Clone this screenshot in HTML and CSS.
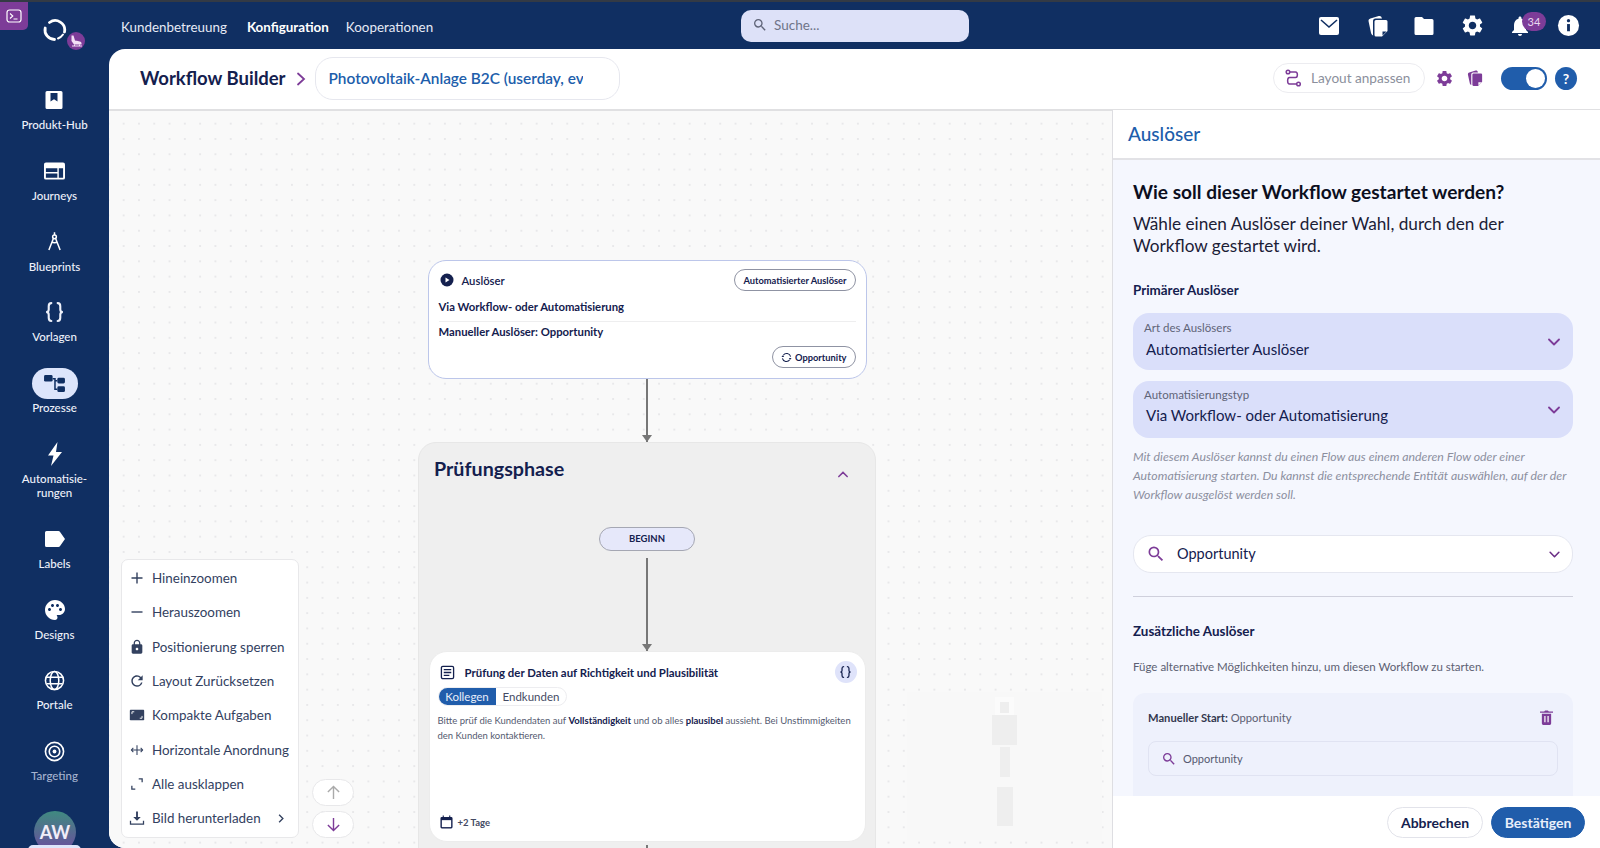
FILE: index.html
```html
<!DOCTYPE html>
<html lang="de">
<head>
    <meta charset="UTF-8">
    <meta name="viewport" content="width=device-width, initial-scale=1.0">
    <title>Workflow Builder</title>
    <link rel="stylesheet" href="styles.css">
</head>
<body>
    <svg class="sprites" width="0" height="0">
        <defs>
            <symbol id="i-gear" viewBox="0 0 24 24"><path d="M19.14 12.94c.04-.3.06-.61.06-.94 0-.32-.02-.64-.07-.94l2.03-1.58c.18-.14.23-.41.12-.61l-1.92-3.32c-.12-.22-.37-.29-.59-.22l-2.39.96c-.5-.38-1.03-.7-1.62-.94l-.36-2.54c-.04-.24-.24-.41-.48-.41h-3.84c-.24 0-.43.17-.47.41l-.36 2.54c-.59.24-1.13.57-1.62.94l-2.39-.96c-.22-.08-.47 0-.59.22L2.74 8.87c-.12.21-.08.47.12.61l2.03 1.58c-.05.3-.09.63-.09.94s.02.64.07.94l-2.03 1.58c-.18.14-.23.41-.12.61l1.92 3.32c.12.22.37.29.59.22l2.39-.96c.5.38 1.03.7 1.62.94l.36 2.54c.05.24.24.41.48.41h3.84c.24 0 .44-.17.47-.41l.36-2.54c.59-.24 1.13-.56 1.62-.94l2.39.96c.22.08.47 0 .59-.22l1.92-3.32c.12-.22.07-.47-.12-.61l-2.01-1.58zM12 15.6c-1.98 0-3.6-1.62-3.6-3.6s1.62-3.6 3.6-3.6 3.6 1.62 3.6 3.6-1.62 3.6-3.6 3.6z"/></symbol>
            <symbol id="i-copies" viewBox="0 0 24 24"><path d="M10 6h10a1.500 1.500 0 0 1 1.500 1.500V17L16 22.500h-6A1.500 1.500 0 0 1 8.500 21V7.500A1.500 1.500 0 0 1 10 6zm6.500 15.500l4-4h-4z" fill-rule="evenodd"/><path d="M7.200 21.500C5.800 21 5.200 20 5 18.800L2.600 7.500C2.300 6 3 5 4.400 4.600L12.800 2c1.500-.4 2.600.2 3.200 2.500H9.500a2.500 2.500 0 0 0-2.500 2.500v13.500c0 .4.100.7.200 1z"/></symbol>
            <symbol id="i-search" viewBox="0 0 24 24"><path d="M15.500 14h-.79l-.28-.27A6.470 6.470 0 0 0 16 9.500 6.500 6.500 0 1 0 9.500 16c1.610 0 3.090-.59 4.230-1.570l.27.28v.79l5 4.990L20.490 19l-4.990-5zm-6 0C7.010 14 5 11.990 5 9.500S7.010 5 9.500 5 14 7.010 14 9.500 11.990 14 9.500 14z"/></symbol>
            <symbol id="i-down" viewBox="0 0 12 8"><path d="M1 1.500l5 5 5-5" fill="none" stroke="currentColor" stroke-width="1.800" stroke-linecap="round" stroke-linejoin="round"/></symbol>
            <symbol id="i-braces" viewBox="0 0 20 19"><path d="M7 1C4.500 1 4.500 2.500 4.500 4v3c0 1.500-1 2.500-2.500 2.500 1.500 0 2.500 1 2.500 2.500v3c0 1.500 0 3 2.500 3M13 1c2.500 0 2.500 1.500 2.500 3v3c0 1.500 1 2.500 2.500 2.500-1.500 0-2.500 1-2.500 2.500v3c0 1.500 0 3-2.500 3" fill="none" stroke="currentColor" stroke-width="2" stroke-linecap="round"/></symbol>
        </defs>
    </svg>

    <div class="terminal-tab">
        <svg viewBox="0 0 16 14" width="16" height="14"><rect x="1" y="1" width="14" height="12" rx="2.500" fill="none" stroke="#fff" stroke-width="1.200"/><path d="M4 4.500L6.800 7 4 9.500M7.500 10h4" fill="none" stroke="#fff" stroke-width="1.100"/></svg>
    </div>

    <header class="topbar">
        <div class="logo">
            <svg viewBox="0 0 26 26" width="26" height="26" fill="none" stroke="#fff" stroke-linecap="round"><path d="M7.500 5.500A9.500 9.500 0 0 1 22.500 15" stroke-width="2.800"/><path d="M3.200 11A9.500 9.500 0 0 0 12.500 22.500" stroke-width="2.800"/><path d="M16 21.500c2.500-1 4-2.500 5-4" stroke-width="2"/></svg>
            <span class="logo-badge">
                <svg viewBox="0 0 14 14" width="14" height="14"><path d="M2.500 1.500h2L6 6.500c2 .5 6 .5 6.500 2.500v1.500H5L2.500 7z" fill="#f3dff6"/><path d="M3 12h10M5.500 10.500v1.500M10.500 10.500v1.500" stroke="#f3dff6" stroke-width="1"/></svg>
            </span>
        </div>
        <nav class="topnav">
            <a>Kundenbetreuung</a>
            <a class="current">Konfiguration</a>
            <a>Kooperationen</a>
        </nav>
        <div class="search">
            <svg class="icon" width="16" height="16"><use href="#i-search"/></svg>
            <span>Suche...</span>
        </div>
        <div class="top-icons">
            <svg viewBox="0 0 22 20" width="22" height="20"><path d="M1 3a2 2 0 0 1 2-2h16a2 2 0 0 1 2 2v14a2 2 0 0 1-2 2H3a2 2 0 0 1-2-2z" fill="#fff"/><path d="M3 4l8 7 8-7" fill="none" stroke="#102f62" stroke-width="1.600"/></svg>
            <svg class="top-copies" width="24" height="24"><use href="#i-copies"/></svg>
            <svg viewBox="0 0 24 24" width="24" height="24"><path d="M4 3h6l2 2h8a1.500 1.500 0 0 1 1.500 1.500v13A1.500 1.500 0 0 1 20 21H4a1.500 1.500 0 0 1-1.500-1.500v-15A1.500 1.500 0 0 1 4 3z"/></svg>
            <svg width="25" height="25"><use href="#i-gear"/></svg>
            <div class="bell">
                <svg viewBox="0 0 24 24" width="24" height="24"><path d="M12 22c1.100 0 2-.9 2-2h-4c0 1.100.9 2 2 2zm6-6v-5c0-3.070-1.630-5.640-4.500-6.320V4c0-.83-.67-1.500-1.500-1.500s-1.500.67-1.500 1.500v.68C7.640 5.360 6 7.920 6 11v5l-2 2v1h16v-1l-2-2z"/></svg>
                <span class="bell-count">34</span>
            </div>
            <svg viewBox="0 0 24 24" width="23" height="23"><circle cx="12" cy="12" r="11"/><circle cx="12" cy="7" r="1.700" fill="#102f62"/><path d="M10.500 10.500h3V18h-3z" fill="#102f62"/></svg>
        </div>
    </header>

    <div class="app">
        <aside class="sidebar">
            <a class="side-item">
                <span class="side-icon"><svg viewBox="0 0 20 20" width="20" height="20"><path d="M3 1h14a1.500 1.500 0 0 1 1.500 1.500v15A1.500 1.500 0 0 1 17 19H3a1.500 1.500 0 0 1-1.500-1.500v-15A1.500 1.500 0 0 1 3 1z"/><path d="M6.500 3h7v8.500L10 9.300l-3.500 2.200z" fill="#102f62"/></svg></span>
                <span>Produkt-Hub</span>
            </a>
            <a class="side-item">
                <span class="side-icon"><svg viewBox="0 0 22 18" width="21" height="18"><path d="M2 0h18a2 2 0 0 1 2 2v14a2 2 0 0 1-2 2H2a2 2 0 0 1-2-2V2a2 2 0 0 1 2-2z"/><path d="M2 6h12v4H2zM2 11.500h12V16H2zM15.500 6H20v10h-4.500z" fill="#102f62"/></svg></span>
                <span>Journeys</span>
            </a>
            <a class="side-item">
                <span class="side-icon"><svg viewBox="0 0 16 20" width="15" height="19" fill="none" stroke="#fff" stroke-width="1.600"><circle cx="8" cy="5" r="2"/><path d="M8 0v3M6.800 6.800L2 19M9.200 6.800L14 19M5 10.500c2 1 4 1 6 0"/></svg></span>
                <span>Blueprints</span>
            </a>
            <a class="side-item">
                <span class="side-icon"><svg width="21" height="20"><use href="#i-braces"/></svg></span>
                <span>Vorlagen</span>
            </a>
            <a class="side-item active">
                <span class="side-icon"><svg viewBox="0 0 24 20" width="23" height="19"><rect x="1" y="1" width="9" height="7" rx="1.500" fill="#102f62"/><rect x="15" y="4" width="8" height="6" rx="1.500" fill="#102f62"/><rect x="15" y="13" width="8" height="6" rx="1.500" fill="#102f62"/><path d="M10 5h2.500v11H15M12.500 7H15" fill="none" stroke="#102f62" stroke-width="1.600"/></svg></span>
                <span>Prozesse</span>
            </a>
            <a class="side-item">
                <span class="side-icon"><svg viewBox="0 0 16 24" width="16" height="24"><path d="M10.500 0L1 13.500h5.500L4 24l11-14H9z"/></svg></span>
                <span>Automatisie-<br>rungen</span>
            </a>
            <a class="side-item">
                <span class="side-icon"><svg viewBox="0 0 20 16" width="20" height="16"><path d="M1.500 0h12c.6 0 1 .2 1.400.7L20 8l-5.100 7.300c-.4.500-.8.700-1.400.700h-12A1.500 1.500 0 0 1 0 14.500v-13A1.500 1.500 0 0 1 1.500 0z"/></svg></span>
                <span>Labels</span>
            </a>
            <a class="side-item">
                <span class="side-icon"><svg viewBox="0 0 24 24" width="24" height="24"><path d="M12 2C6.490 2 2 6.490 2 12s4.490 10 10 10c1.380 0 2.500-1.120 2.500-2.500 0-.61-.23-1.200-.64-1.670-.08-.1-.13-.21-.13-.33 0-.28.22-.5.500-.5H16c3.310 0 6-2.690 6-6 0-4.960-4.490-9-10-9zm5.500 11c-.83 0-1.500-.67-1.500-1.500s.67-1.500 1.500-1.500 1.500.67 1.500 1.500-.67 1.500-1.500 1.500zm-3-4c-.83 0-1.500-.67-1.500-1.500S13.670 6 14.500 6s1.500.67 1.500 1.500S15.330 9 14.500 9zM5 11.500c0-.83.67-1.500 1.500-1.500s1.500.67 1.500 1.500S7.330 13 6.500 13 5 12.330 5 11.500zm6-4c0 .83-.67 1.500-1.500 1.500S8 8.330 8 7.500 8.670 6 9.500 6s1.500.67 1.500 1.500z"/></svg></span>
                <span>Designs</span>
            </a>
            <a class="side-item">
                <span class="side-icon"><svg viewBox="0 0 22 22" width="21" height="21" fill="none" stroke="#fff" stroke-width="1.600"><circle cx="11" cy="11" r="9.500"/><ellipse cx="11" cy="11" rx="4.500" ry="9.500"/><path d="M2.500 7.500h17M2.500 14.500h17"/></svg></span>
                <span>Portale</span>
            </a>
            <a class="side-item muted">
                <span class="side-icon"><svg viewBox="0 0 22 22" width="21" height="21" fill="none" stroke="#fff" stroke-width="1.700"><circle cx="11" cy="11" r="9.500"/><circle cx="11" cy="11" r="5.500"/><circle cx="11" cy="11" r="2" fill="#fff" stroke="none"/></svg></span>
                <span>Targeting</span>
            </a>
            <div class="avatar">AW</div>
        </aside>

        <main class="main">
            <div class="page-head">
                <h1>Workflow Builder</h1>
                <svg class="crumb" viewBox="0 0 10 14" width="10" height="14"><path d="M2 1.500L8 7l-6 5.500" fill="none" stroke="#7d3c98" stroke-width="1.800" stroke-linecap="round"/></svg>
                <div class="flow-name"><span>Photovoltaik-Anlage B2C (userday, ev</span></div>
                <div class="head-tools">
                    <button class="layout-btn">
                        <svg viewBox="0 0 18 18" width="18" height="18" fill="none" stroke="#7d3c98" stroke-width="1.500"><circle cx="4" cy="3" r="1.800"/><circle cx="14.500" cy="15" r="1.800"/><path d="M6 3h5.500c2.500 0 2.500 5.500 0 5.500h-6c-2.500 0-2.500 6.500 0 6.500h7"/></svg>
                        Layout anpassen
                    </button>
                    <svg class="purple" width="19" height="19"><use href="#i-gear"/></svg>
                    <svg class="purple" width="18" height="18"><use href="#i-copies"/></svg>
                    <div class="toggle"><span></span></div>
                    <div class="help">?</div>
                </div>
            </div>

            <div class="workspace">
                <section class="canvas">
                    <div class="minimap">
                        <i class="mm-a"></i><i class="mm-b"></i><i class="mm-c"></i><i class="mm-d"></i>
                    </div>

                    <div class="flow">
                        <div class="trigger-card">
                            <div class="trigger-top">
                                <svg viewBox="0 0 14 14" width="14" height="14"><circle cx="7" cy="7" r="6.500" fill="#14204e"/><path d="M5.500 4.500L9.500 7l-4 2.500z" fill="#fff"/></svg>
                                <span class="trigger-name">Auslöser</span>
                                <span class="chip">Automatisierter Auslöser</span>
                            </div>
                            <div class="trigger-line">Via Workflow- oder Automatisierung</div>
                            <div class="trigger-line ruled">Manueller Auslöser: Opportunity</div>
                            <div class="trigger-foot">
                                <span class="chip">
                                    <svg viewBox="0 0 12 12" width="11" height="11" fill="none" stroke="#14204e" stroke-width="1.200"><path d="M10.500 5A4.500 4.500 0 0 0 2.500 3.500M1.500 7a4.500 4.500 0 0 0 8 1.500"/><path d="M.5 5.500h3L2 3.500zM8.500 6.500h3l-1.500 2z" fill="#14204e" stroke="none"/></svg>
                                    Opportunity
                                </span>
                            </div>
                        </div>

                        <div class="edge edge-first"></div>

                        <div class="phase">
                            <div class="phase-head">
                                <h2>Prüfungsphase</h2>
                                <svg class="phase-toggle" viewBox="0 0 12 8" width="10" height="7"><path d="M1 6.500l5-5 5 5" fill="none" stroke="#7d3c98" stroke-width="1.800" stroke-linecap="round"/></svg>
                            </div>
                            <div class="begin">BEGINN</div>
                            <div class="edge edge-long"></div>
                            <div class="task-card">
                                <div class="task-top">
                                    <svg viewBox="0 0 16 16" width="15" height="15" fill="none" stroke="#14204e" stroke-width="1.400"><rect x="1.500" y="1.500" width="13" height="13" rx="1.500"/><path d="M4 5h8M4 8h8M4 11h6"/></svg>
                                    <span class="task-title">Prüfung der Daten auf Richtigkeit und Plausibilität</span>
                                    <span class="task-vars"><svg width="13" height="12"><use href="#i-braces"/></svg></span>
                                </div>
                                <div class="tabs">
                                    <span class="tab on">Kollegen</span>
                                    <span class="tab">Endkunden</span>
                                </div>
                                <p class="task-text">Bitte prüf die Kundendaten auf <b>Vollständigkeit</b> und ob alles <b>plausibel</b> aussieht. Bei Unstimmigkeiten den Kunden kontaktieren.</p>
                                <div class="task-foot">
                                    <svg viewBox="0 0 14 14" width="13" height="14"><path d="M2 1.500h10a1.500 1.500 0 0 1 1.500 1.500v9.500A1.500 1.500 0 0 1 12 14H2a1.500 1.500 0 0 1-1.500-1.500V3A1.500 1.500 0 0 1 2 1.500z" fill="#14204e"/><rect x="2" y="5" width="10" height="7.500" fill="#fff"/><path d="M3.500 0v2M10.500 0v2" stroke="#14204e" stroke-width="1.200"/></svg>
                                    <span>+2 Tage</span>
                                </div>
                            </div>
                            <div class="edge edge-tail"></div>
                        </div>
                    </div>

                    <div class="zoom-menu">
                        <div class="zoom-item"><svg viewBox="0 0 14 14" width="14" height="14"><path d="M7 1.500v11M1.500 7h11" stroke-width="1.400" stroke="#33415f"/></svg>Hineinzoomen</div>
                        <div class="zoom-item"><svg viewBox="0 0 14 14" width="14" height="14"><path d="M1.500 7h11" stroke-width="1.400" stroke="#33415f"/></svg>Herauszoomen</div>
                        <div class="zoom-item"><svg viewBox="0 0 24 24" width="16" height="16"><path d="M18 8h-1V6c0-2.760-2.240-5-5-5S7 3.240 7 6v2H6c-1.100 0-2 .9-2 2v10c0 1.100.9 2 2 2h12c1.100 0 2-.9 2-2V10c0-1.100-.9-2-2-2zm-6 9c-1.100 0-2-.9-2-2s.9-2 2-2 2 .9 2 2-.9 2-2 2zm3.100-9H8.900V6c0-1.710 1.390-3.100 3.100-3.100 1.710 0 3.100 1.390 3.100 3.100v2z"/></svg>Positionierung sperren</div>
                        <div class="zoom-item"><svg viewBox="0 0 24 24" width="17" height="17"><path d="M17.650 6.350A7.958 7.958 0 0 0 12 4c-4.420 0-7.990 3.580-7.990 8s3.570 8 7.990 8c3.730 0 6.840-2.550 7.730-6h-2.080A5.990 5.990 0 0 1 12 18c-3.310 0-6-2.690-6-6s2.690-6 6-6c1.660 0 3.140.69 4.220 1.780L13 11h7V4l-2.350 2.350z"/></svg>Layout Zurücksetzen</div>
                        <div class="zoom-item"><svg viewBox="0 0 16 12" width="15" height="11"><rect width="16" height="12" rx="1.500"/><path d="M2.500 5V2.500H5M13.500 7v2.500H11" fill="none" stroke="#fff" stroke-width="1"/></svg>Kompakte Aufgaben</div>
                        <div class="zoom-item"><svg viewBox="0 0 16 12" width="13" height="10" fill="none" stroke="#33415f" stroke-width="1.300"><path d="M8 0v12M1 6h14M3.500 3.500L1 6l2.500 2.500M12.500 3.500L15 6l-2.500 2.500"/></svg>Horizontale Anordnung</div>
                        <div class="zoom-item"><svg viewBox="0 0 14 14" width="12" height="12" fill="none" stroke="#33415f" stroke-width="1.500"><path d="M1 9v4h4M9 1h4v4"/></svg>Alle ausklappen</div>
                        <div class="zoom-item"><svg viewBox="0 0 16 16" width="15" height="15"><path d="M7 1h2v6h3L8 11 4 7h3z"/><path d="M1 11v3.500h14V11" fill="none" stroke="#33415f" stroke-width="1.500"/></svg>Bild herunterladen
                            <svg class="zoom-more" viewBox="0 0 8 12" width="6" height="9"><path d="M1.500 1l5 5-5 5" fill="none" stroke="#33415f" stroke-width="1.800"/></svg>
                        </div>
                    </div>

                    <div class="scroll-btns">
                        <button class="scroll-btn"><svg viewBox="0 0 16 16" width="15" height="15" fill="none" stroke="#aaa" stroke-width="1.500"><path d="M8 15V1.500M2 7.500l6-6 6 6"/></svg></button>
                        <button class="scroll-btn"><svg viewBox="0 0 16 16" width="15" height="15" fill="none" stroke="#7d3c98" stroke-width="1.500"><path d="M8 1v13.500M2 8.500l6 6 6-6"/></svg></button>
                    </div>
                </section>

                <aside class="panel">
                    <div class="panel-head">Auslöser</div>
                    <div class="panel-body">
                        <h3>Wie soll dieser Workflow gestartet werden?</h3>
                        <p class="panel-sub">Wähle einen Auslöser deiner Wahl, durch den der Workflow gestartet wird.</p>
                        <div class="section-label">Primärer Auslöser</div>
                        <div class="select">
                            <small>Art des Auslösers</small>
                            <span>Automatisierter Auslöser</span>
                            <svg class="select-arrow" width="12" height="8"><use href="#i-down"/></svg>
                        </div>
                        <div class="select">
                            <small>Automatisierungstyp</small>
                            <span>Via Workflow- oder Automatisierung</span>
                            <svg class="select-arrow" width="12" height="8"><use href="#i-down"/></svg>
                        </div>
                        <p class="hint">Mit diesem Auslöser kannst du einen Flow aus einem anderen Flow oder einer Automatisierung starten. Du kannst die entsprechende Entität auswählen, auf der der Workflow ausgelöst werden soll.</p>
                        <div class="entity">
                            <svg class="purple" width="20" height="20"><use href="#i-search"/></svg>
                            <span>Opportunity</span>
                            <svg class="entity-arrow" width="11" height="7"><use href="#i-down"/></svg>
                        </div>
                        <hr class="rule">
                        <div class="section-label extra">Zusätzliche Auslöser</div>
                        <p class="extra-text">Füge alternative Möglichkeiten hinzu, um diesen Workflow zu starten.</p>
                        <div class="extra-card">
                            <div class="extra-top">
                                <span><b>Manueller Start:</b> Opportunity</span>
                                <svg viewBox="0 0 14 16" width="13" height="15"><path d="M2 4h10v10.500a1.500 1.500 0 0 1-1.500 1.500h-7A1.500 1.500 0 0 1 2 14.500zM0 1.500h4.500L5.500.5h3l1 1H14V3H0z" fill="#7d3c98"/><path d="M5.300 6.500v6.500M8.700 6.500v6.500" stroke="#fff" stroke-width="1.300"/></svg>
                            </div>
                            <div class="extra-input">
                                <svg class="purple" width="16" height="16"><use href="#i-search"/></svg>
                                <span>Opportunity</span>
                            </div>
                        </div>
                    </div>
                    <div class="panel-foot">
                        <button class="btn">Abbrechen</button>
                        <button class="btn primary">Bestätigen</button>
                    </div>
                </aside>
            </div>
        </main>
    </div>
</body>
</html>
```

FILE: styles.css
```css
/* General styles */
* {
    box-sizing: border-box;
}
body {
    font-family: Lato, "Open Sans", sans-serif;
    background-color: #102f62;
    color: #14204e;
    margin: 0;
    height: 100vh;
    overflow: hidden;
    display: flex;
    flex-direction: column;
    position: relative;
}
button {
    font-family: inherit;
}
h1, h2, h3, p {
    margin: 0;
}
.sprites {
    position: absolute;
}
.purple {
    fill: #7d3c98;
    flex: none;
}

/* Top bar */
.terminal-tab {
    position: absolute;
    left: 0;
    top: 2px;
    width: 28px;
    height: 28px;
    background: #7d3c98;
    border-bottom-right-radius: 5px;
    display: flex;
    align-items: center;
    justify-content: center;
    z-index: 3;
}
.topbar {
    height: 49px;
    flex: none;
    border-top: 2px solid #333a45;
    display: flex;
    align-items: center;
    color: #fff;
}
.logo {
    position: relative;
    width: 121px;
    height: 47px;
    flex: none;
}
.logo > svg {
    position: absolute;
    left: 42px;
    top: 15px;
}
.logo-badge {
    position: absolute;
    left: 67px;
    top: 30px;
    width: 18px;
    height: 18px;
    border-radius: 50%;
    background: #7d3c98;
    display: flex;
    align-items: center;
    justify-content: center;
}
.topnav {
    display: flex;
    width: 620px;
    flex: none;
    font-size: 13.4px;
    color: #e6eaf6;
    padding-top: 2px;
}
.topnav a {
    margin-right: 20px;
}
.topnav .current {
    font-weight: 700;
    color: #fff;
    margin-right: 17px;
}
.search {
    width: 228px;
    height: 32px;
    flex: none;
    background: #dde1f8;
    border-radius: 10px;
    display: flex;
    align-items: center;
    gap: 6px;
    padding: 0 0 2px 11px;
    color: #6f7488;
    font-size: 13.5px;
}
.search .icon {
    fill: #5f6478;
}
.top-icons {
    margin-left: auto;
    display: flex;
    align-items: center;
    gap: 24px;
    padding-right: 20px;
    fill: #fff;
}
.top-copies {
    margin: 0 -2px 0 2px;
}
.bell {
    position: relative;
    width: 24px;
    height: 24px;
    margin: 0 1px 0 -1px;
}
.bell-count {
    position: absolute;
    top: -2px;
    left: 14px;
    width: 24px;
    height: 19px;
    border-radius: 10px;
    background: #7d3c98;
    font-size: 11px;
    line-height: 19px;
    text-align: center;
    color: #e9d9f0;
}

/* Sidebar */
.app {
    flex: 1;
    display: flex;
    min-height: 0;
}
.sidebar {
    width: 109px;
    flex: none;
    padding-top: 39px;
    display: flex;
    flex-direction: column;
    align-items: center;
    gap: 26.8px;
    color: #eef1fa;
    position: relative;
    overflow: hidden;
}
.side-item {
    display: flex;
    flex-direction: column;
    align-items: center;
    text-align: center;
    font-size: 11.5px;
    line-height: 14px;
    font-weight: 500;
}
.side-icon {
    height: 24px;
    margin-bottom: 6px;
    display: flex;
    align-items: center;
    justify-content: center;
    fill: #fff;
}
.side-item.active .side-icon {
    width: 46px;
    height: 31px;
    margin: -3px 0 2px;
    border-radius: 16px;
    background: #dde5fb;
}
.side-item.muted {
    color: #a6b3cf;
}
.avatar {
    position: absolute;
    left: 34px;
    top: 762px;
    width: 42px;
    height: 42px;
    border-radius: 50%;
    background: linear-gradient(#3f8a80, #6d4aa0);
    color: #f1edf8;
    font-size: 18px;
    font-weight: 700;
    line-height: 42px;
    text-align: center;
}
.avatar::after {
    content: "";
    position: absolute;
    left: -6px;
    top: 34px;
    width: 53px;
    height: 9px;
    border-radius: 5px 5px 0 0;
    background: #dde5fb;
}

/* Main area */
.main {
    flex: 1;
    min-width: 0;
    background: #fff;
    border-radius: 16px 0 0 16px;
    overflow: hidden;
    display: flex;
    flex-direction: column;
}
.page-head {
    height: 62px;
    flex: none;
    border-bottom: 2px solid #e0e0e2;
    display: flex;
    align-items: center;
    padding: 0 23px 2px 31px;
}
.page-head h1 {
    font-size: 18.5px;
    font-weight: 700;
    color: #14204e;
}
.crumb {
    margin: 2px 9px 0 10px;
}
.flow-name {
    width: 305px;
    height: 43px;
    border: 1px solid #e6e7ee;
    border-radius: 18px;
    padding: 0 36px 0 13px;
    display: flex;
    align-items: center;
    color: #205dab;
    font-size: 15.4px;
    font-weight: 600;
    white-space: nowrap;
    overflow: hidden;
}
.flow-name span {
    overflow: hidden;
}
.head-tools {
    margin-left: auto;
    display: flex;
    align-items: center;
}
.head-tools .purple {
    margin-right: 12px;
}
.head-tools .purple + .purple {
    margin-right: 17px;
}
.layout-btn {
    width: 152px;
    height: 30px;
    border: 1px solid #ececf0;
    border-radius: 15px;
    background: #fff;
    color: #8b8f9c;
    font-size: 13.6px;
    display: flex;
    align-items: center;
    gap: 9px;
    padding: 0 0 0 10px;
    margin-right: 10px;
}
.toggle {
    width: 46px;
    height: 23px;
    border-radius: 12px;
    background: #205dab;
    padding: 2px;
    display: flex;
    justify-content: flex-end;
    margin-right: 8px;
}
.toggle span {
    width: 19px;
    height: 19px;
    border-radius: 50%;
    background: #fff;
}
.help {
    width: 22px;
    height: 23px;
    border-radius: 50%;
    background: #205dab;
    color: #fff;
    font-size: 14px;
    font-weight: 700;
    line-height: 23px;
    text-align: center;
}
.workspace {
    flex: 1;
    display: flex;
    min-height: 0;
}

/* Canvas */
.canvas {
    flex: 1;
    position: relative;
    overflow: hidden;
    background-color: #f9f9f9;
    background-image: radial-gradient(circle, #e8e8ea 0.8px, transparent 1.1px);
    background-size: 15.3px 15.3px;
    background-position: 7px 5px;
}
.minimap {
    position: absolute;
    left: 798px;
    top: 581px;
    width: 195px;
    height: 148px;
    background: #f8f8f8;
}
.minimap i {
    position: absolute;
    background: #eeeeee;
}
.mm-a { left: 93px; top: 10px; width: 9px; height: 11px; outline: 5px solid #fbfbfb; }
.mm-b { left: 85px; top: 23px; width: 25px; height: 30px; }
.mm-c { left: 93px; top: 55px; width: 10px; height: 30px; }
.mm-d { left: 90px; top: 95px; width: 16px; height: 39px; }

.flow {
    position: absolute;
    left: 309px;
    top: 149px;
    width: 458px;
    display: flex;
    flex-direction: column;
    align-items: center;
}
.trigger-card {
    width: 439px;
    height: 119px;
    background: #fff;
    border: 1.5px solid #bcc6ea;
    border-radius: 18px;
    padding: 8px 10px 0 10px;
    display: flex;
    flex-direction: column;
    font-size: 11.3px;
    font-weight: 700;
}
.trigger-top {
    display: flex;
    align-items: center;
    padding-left: 1px;
    height: 22px;
}
.trigger-name {
    margin-left: 8px;
    font-weight: 600;
}
.chip {
    margin-left: auto;
    height: 22px;
    border: 1px solid #8f93a3;
    border-radius: 11px;
    padding: 0 8px;
    font-size: 9.3px;
    font-weight: 700;
    display: inline-flex;
    align-items: center;
    gap: 3px;
}
.trigger-line {
    margin-top: 8px;
    line-height: 15px;
}
.trigger-line.ruled {
    margin-top: 7px;
    border-top: 1px solid #eeeeef;
    padding-top: 2px;
}
.trigger-foot {
    display: flex;
    margin-top: 7px;
}
.edge {
    position: relative;
    width: 2px;
    background: #777;
    flex: none;
}
.edge::after {
    content: "";
    position: absolute;
    left: -4px;
    bottom: 0;
    border: 5px solid transparent;
    border-bottom-width: 0;
    border-top: 7px solid #777;
}
.edge-first {
    height: 63px;
}
.edge-long {
    height: 93px;
    margin-top: 7px;
}
.edge-tail {
    height: 12px;
    margin-top: 3px;
}
.edge-tail::after {
    display: none;
}
.phase {
    width: 458px;
    height: 440px;
    background: #efefef;
    border: 1px solid #e7e7e7;
    border-radius: 18px;
    display: flex;
    flex-direction: column;
    align-items: center;
}
.phase-head {
    align-self: stretch;
    height: 84px;
    display: flex;
    align-items: flex-start;
    justify-content: space-between;
    padding: 14px 27px 0 15px;
}
.phase-head h2 {
    font-size: 19.7px;
    line-height: 24px;
    font-weight: 700;
}
.phase-toggle {
    margin-top: 14px;
}
.begin {
    width: 96px;
    height: 24px;
    border: 1px solid #a5a7b3;
    border-radius: 12px;
    background: #e6e8fa;
    font-size: 9.5px;
    font-weight: 700;
    line-height: 22px;
    text-align: center;
}
.task-card {
    width: 437px;
    height: 191px;
    flex: none;
    background: #fff;
    border-radius: 18px;
    border: 1px solid #ececec;
    padding: 9px 8px 0 8px;
    display: flex;
    flex-direction: column;
}
.task-top {
    display: flex;
    align-items: center;
    height: 22px;
    padding: 0 0 0 2px;
}
.task-title {
    margin-left: 10px;
    font-size: 11.4px;
    font-weight: 700;
}
.task-vars {
    margin-left: auto;
    width: 22px;
    height: 22px;
    border-radius: 50%;
    background: #dfe3fa;
    display: flex;
    align-items: center;
    justify-content: center;
}
.tabs {
    display: inline-flex;
    align-self: flex-start;
    margin-top: 4px;
    height: 19px;
    border: 1px solid #ededf0;
    border-radius: 10px;
    overflow: hidden;
    font-size: 11.5px;
    color: #444a63;
}
.tab {
    padding: 0 7px;
    line-height: 17px;
}
.tab.on {
    background: #205dab;
    color: #e8eefa;
    width: 57px;
    text-align: center;
    padding: 0;
}
.task-text {
    margin-top: 8px;
    font-size: 9.5px;
    line-height: 14.6px;
    color: #555a70;
}
.task-text b {
    color: #14204e;
}
.task-foot {
    margin-top: auto;
    margin-bottom: 12px;
    padding-left: 2px;
    display: flex;
    align-items: center;
    gap: 5px;
    font-size: 9.5px;
    font-weight: 700;
    color: #444a63;
}

/* Zoom menu */
.zoom-menu {
    position: absolute;
    left: 12px;
    top: 448px;
    width: 178px;
    height: 279px;
    background: #fff;
    border: 1px solid #e8e8ea;
    border-radius: 7px;
    padding: 1px 0;
}
.zoom-item {
    height: 34.3px;
    display: flex;
    align-items: center;
    font-size: 13.4px;
    color: #33415f;
    fill: #33415f;
    position: relative;
    padding-left: 30px;
}
.zoom-item > svg:first-child {
    position: absolute;
    left: 15px;
    top: 50%;
    transform: translate(-50%, -50%);
}
.zoom-more {
    margin-left: auto;
    margin-right: 14px;
}
.scroll-btns {
    position: absolute;
    left: 203px;
    top: 668px;
    display: flex;
    flex-direction: column;
    gap: 5px;
}
.scroll-btn {
    width: 42px;
    height: 27px;
    background: #fff;
    border: 1px solid #e8e8ea;
    border-radius: 14px;
    padding: 0;
    display: flex;
    align-items: center;
    justify-content: center;
}

/* Right panel */
.panel {
    width: 488px;
    flex: none;
    border-left: 1px solid #dedee2;
    display: flex;
    flex-direction: column;
    margin-top: -1px;
    background: #fff;
}
.panel-head {
    height: 50px;
    flex: none;
    border-bottom: 2px solid #e2e2e6;
    padding: 11px 0 0 15px;
    font-size: 19px;
    line-height: 26px;
    color: #205dab;
    font-weight: 500;
}
.panel-body {
    flex: 1;
    min-height: 0;
    overflow: hidden;
    background: #f5f7fe;
    padding: 20px 27px 0 20px;
}
.panel-body h3 {
    font-size: 19.1px;
    line-height: 24px;
    font-weight: 700;
    color: #0c0f1e;
}
.panel-sub {
    margin-top: 9px;
    font-size: 17.2px;
    line-height: 21.5px;
    color: #1b2036;
    width: 395px;
}
.section-label {
    margin-top: 26px;
    font-size: 13.4px;
    line-height: 16px;
    font-weight: 700;
}
.select {
    position: relative;
    height: 57px;
    margin-top: 15px;
    background: #dadffa;
    border-radius: 16px;
    padding: 8px 11px 0;
    display: flex;
    flex-direction: column;
}
.select + .select {
    margin-top: 11px;
    padding-top: 7px;
}
.select small {
    font-size: 11.5px;
    line-height: 14px;
    color: #5f6478;
}
.select span {
    margin: 4px 0 0 2px;
    font-size: 15px;
    line-height: 20px;
}
.select + .select span {
    margin-top: 3px;
}
.select-arrow {
    position: absolute;
    right: 13px;
    top: 25px;
    color: #7d3c98;
}
.hint {
    margin-top: 9px;
    font-size: 12.3px;
    line-height: 19px;
    font-style: italic;
    color: #8c8f9e;
}
.entity {
    height: 38px;
    margin-top: 31px;
    background: #fff;
    border: 1px solid #e5e7f0;
    border-radius: 18px;
    padding: 0 12px 0 12px;
    display: flex;
    align-items: center;
    font-size: 14.5px;
}
.entity span {
    margin-left: 11px;
    padding-bottom: 2px;
}
.entity-arrow {
    margin-left: auto;
    color: #6a2d85;
}
.rule {
    border: 0;
    border-top: 1px solid #cfd0dc;
    margin: 23px 0 0;
}
.section-label.extra {
    margin-top: 26px;
}
.extra-text {
    margin-top: 20px;
    font-size: 11.5px;
    line-height: 16px;
    color: #5c6072;
}
.extra-card {
    margin-top: 18px;
    height: 120px;
    background: #eef1fc;
    border-radius: 12px;
    padding: 14px 15px 0;
}
.extra-top {
    display: flex;
    justify-content: space-between;
    align-items: center;
    padding-right: 5px;
    height: 20px;
    font-size: 11.2px;
    color: #5c6072;
}
.extra-top b {
    color: #33384f;
}
.extra-input {
    margin-top: 14px;
    height: 35px;
    border: 1px solid #e0e3f2;
    border-radius: 8px;
    padding-left: 12px;
    display: flex;
    align-items: center;
    gap: 6px;
    font-size: 11px;
    color: #555a70;
}
.panel-foot {
    height: 52px;
    flex: none;
    background: #fff;
    display: flex;
    justify-content: flex-end;
    align-items: center;
    gap: 8px;
    padding: 0 15px 0 0;
}
.btn {
    width: 96px;
    height: 31px;
    border: 1px solid #e2e3ea;
    border-radius: 16px;
    background: #fff;
    color: #14204e;
    font-size: 14px;
    font-weight: 700;
    padding: 0;
}
.btn.primary {
    width: 94px;
    background: #205dab;
    border-color: #205dab;
    color: #e8eefa;
}
```
